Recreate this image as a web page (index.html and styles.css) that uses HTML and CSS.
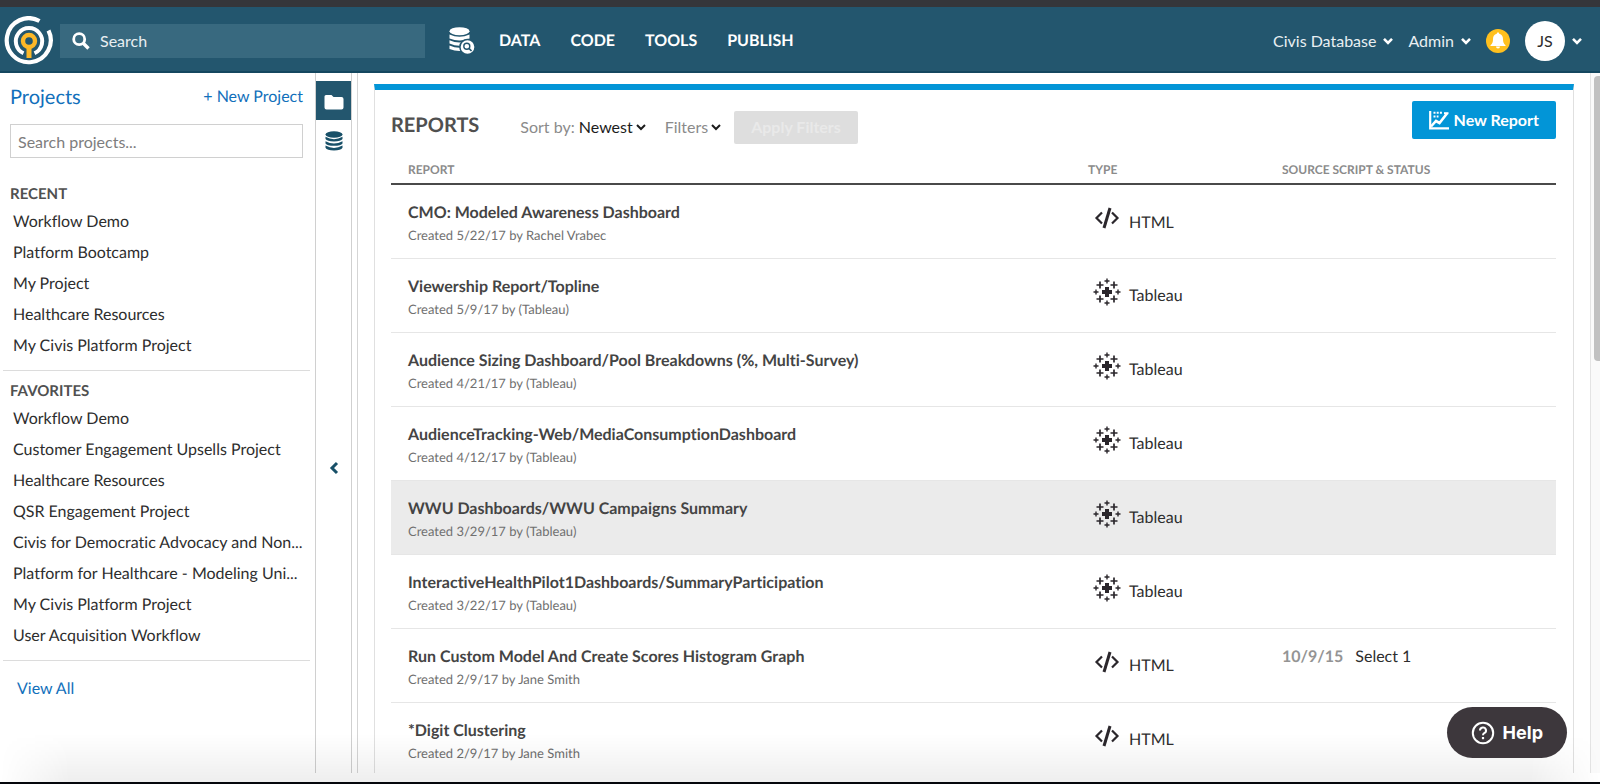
FILE: index.html
```html
<!DOCTYPE html>
<html lang="en">
<head>
<meta charset="utf-8">
<title>Reports</title>
<link rel="stylesheet" href="styles.css">
</head>
<body>
<svg class="sprite" aria-hidden="true">
  <symbol id="i-code" viewBox="0 0 26 22"><path d="M8 5.500L2.500 11L8 16.500M18 5.500L23.500 11L18 16.500" fill="none" stroke="#2b272c" stroke-width="2.200"/><path d="M16 1L10 21" stroke="#2b272c" stroke-width="3"/></symbol>
  <symbol id="i-tableau" viewBox="0 0 28 28"><g stroke="#2b272c" fill="none"><path d="M14 9V19M9 14H19" stroke-width="4"/><path d="M7 3.500V10.500M3.500 7H10.500M21 3.500V10.500M17.500 7H24.500M7 17.500V24.500M3.500 21H10.500M21 17.500V24.500M17.500 21H24.500" stroke-width="1.700"/><path d="M14 .5V5.500M11.500 3H16.500M14 22.500V27.500M11.500 25H16.500M3 11.500V16.500M.5 14H5.500M25 11.500V16.500M22.500 14H27.500" stroke-width="1.400"/></g></symbol>
  <symbol id="i-down" viewBox="0 0 10 8"><path d="M1 2L5 6L9 2" fill="none" stroke="currentColor" stroke-width="2"/></symbol>
  <symbol id="i-down-bold" viewBox="0 0 10 8"><path d="M1 1.800L5 5.800L9 1.800" fill="none" stroke="currentColor" stroke-width="2.600"/></symbol>
</svg>
<div class="app">
  <header class="topbar">
    <a class="logo" href="#" aria-label="Home">
      <svg width="50" height="50" viewBox="0 0 50 50" fill="none">
        <path d="M35.500 5A22 22 0 1 0 44.500 14.500" stroke="#fff" stroke-width="4.200"/>
        <path d="M19.500 37.300A13.200 13.200 0 1 1 30.500 37.300" stroke="#fff" stroke-width="4"/>
        <circle cx="25" cy="25" r="6" stroke="#fdb827" stroke-width="4.400"/>
        <path d="M25 30V42" stroke="#fdb827" stroke-width="5"/>
      </svg>
    </a>
    <label class="search">
      <svg width="18" height="18" viewBox="0 0 18 18" fill="none" stroke="#fff" aria-hidden="true"><circle cx="7.200" cy="7.200" r="5.500" stroke-width="2.800"/><path d="M11 11L16.500 16.500" stroke-width="3.400"/></svg>
      <input type="text" placeholder="Search" aria-label="Search">
    </label>
    <a class="dbsearch" href="#" aria-label="Search data">
      <svg width="26" height="28" viewBox="0 0 26 28">
        <ellipse cx="10.500" cy="4.200" rx="10" ry="4" fill="#fff"/>
        <g fill="#fff"><path d="M.5 7.500Q10.500 12 20.500 7.500V11.500Q10.500 15.500 .5 11.500Z"/><path d="M.5 13.200Q10.500 17.700 20.500 13.200V16.500Q10.500 21 .5 16.500Z"/><path d="M.5 18.400Q10.500 23 20.500 18.400V22Q10.500 26 .5 22Z"/></g>
        <circle cx="18.500" cy="20" r="7.600" fill="#fff" stroke="#23566e" stroke-width="1.500"/>
        <circle cx="17.800" cy="19.200" r="3" fill="none" stroke="#23566e" stroke-width="1.400"/><path d="M20 21.400L22.500 24" stroke="#23566e" stroke-width="1.600"/>
      </svg>
    </a>
    <nav class="mainnav">
      <a href="#">DATA</a><a href="#">CODE</a><a href="#">TOOLS</a><a href="#">PUBLISH</a>
    </nav>
    <div class="account">
      <button class="dropdown">Civis Database <svg width="10" height="8"><use href="#i-down-bold"/></svg></button>
      <button class="dropdown">Admin <svg width="10" height="8"><use href="#i-down-bold"/></svg></button>
      <button class="bell" aria-label="Notifications"><svg width="24" height="24" viewBox="0 0 24 24"><circle cx="12" cy="12" r="12" fill="#ffc01e"/><path d="M12 3.500C12.800 3.500 13.200 4 13.200 4.800C16 5.500 17 7.500 17 10C17 13 17.500 14.500 19.500 16.200V17H4.500V16.200C6.500 14.500 7 13 7 10C7 7.500 8 5.500 10.800 4.800C10.800 4 11.200 3.500 12 3.500ZM10 17.500H14A2 2 0 0 1 10 17.500Z" fill="#fff"/></svg></button>
      <button class="user"><span class="avatar">JS</span><svg width="10" height="8"><use href="#i-down-bold"/></svg></button>
    </div>
  </header>
  <div class="body">
    <aside class="sidebar">
      <div class="side-head"><h2>Projects</h2><a href="#">+ New Project</a></div>
      <input class="side-search" type="text" placeholder="Search projects..." aria-label="Search projects">
      <section class="group">
        <h3>RECENT</h3>
        <ul>
          <li><a href="#">Workflow Demo</a></li>
          <li><a href="#">Platform Bootcamp</a></li>
          <li><a href="#">My Project</a></li>
          <li><a href="#">Healthcare Resources</a></li>
          <li><a href="#">My Civis Platform Project</a></li>
        </ul>
      </section>
      <section class="group">
        <h3>FAVORITES</h3>
        <ul>
          <li><a href="#">Workflow Demo</a></li>
          <li><a href="#">Customer Engagement Upsells Project</a></li>
          <li><a href="#">Healthcare Resources</a></li>
          <li><a href="#">QSR Engagement Project</a></li>
          <li><a href="#">Civis for Democratic Advocacy and Non...</a></li>
          <li><a href="#">Platform for Healthcare - Modeling Uni...</a></li>
          <li><a href="#">My Civis Platform Project</a></li>
          <li><a href="#">User Acquisition Workflow</a></li>
        </ul>
      </section>
      <a class="view-all" href="#">View All</a>
    </aside>
    <div class="rail">
      <button class="rail-btn active" aria-label="Projects"><svg width="20" height="16" viewBox="0 0 20 16"><path d="M2 1H7.500L9.500 3H17.500Q19.500 3 19.500 5V13.500Q19.500 15.500 17.500 15.500H2.500Q.5 15.500 .5 13.500V2.500Q.5 1 2 1Z" fill="#fff"/></svg></button>
      <button class="rail-btn" aria-label="Databases"><svg width="18" height="20" viewBox="0 0 18 20" fill="#185068"><ellipse cx="9" cy="3.500" rx="8.500" ry="3.200"/><path d="M.5 5.800Q9 10.500 17.500 5.800V8Q16 10.400 9 10.400T.5 8Z"/><path d="M.5 10.200Q9 14.900 17.500 10.200V12.400Q16 14.800 9 14.800T.5 12.400Z"/><path d="M.5 14.600Q9 19.300 17.500 14.600V16.800Q16 19.400 9 19.400T.5 16.800Z"/></svg></button>
      <button class="collapse" aria-label="Collapse sidebar"><svg width="10" height="14" viewBox="0 0 10 14"><path d="M8 2L3 7L8 12" fill="none" stroke="#185068" stroke-width="3"/></svg></button>
    </div>
    <main class="content">
      <div class="panel">
        <div class="panel-head">
          <h1>REPORTS</h1>
          <button class="filter">Sort by: <span>Newest</span><svg width="10" height="8"><use href="#i-down"/></svg></button>
          <button class="filter">Filters<svg width="10" height="8"><use href="#i-down"/></svg></button>
          <button class="apply" disabled>Apply Filters</button>
          <button class="new-report"><svg width="20" height="19" viewBox="0 0 20 19" fill="none" stroke="#fff"><path d="M1.200 0V17.300H20" stroke-width="2.200"/><path d="M2 15.500L7 10L10.500 12L18 2.500" stroke-width="2.600"/><path d="M15 2.200H19.500" stroke-width="2"/><path d="M4.500 1.800H13M4.500 5.500H9.500" stroke-width="2" stroke-dasharray="2 1.200"/></svg>New Report</button>
        </div>
        <table>
          <thead><tr><th class="c-report">REPORT</th><th class="c-type">TYPE</th><th class="c-source">SOURCE SCRIPT &amp; STATUS</th></tr></thead>
          <tbody>
            <tr><td><a href="#">CMO: Modeled Awareness Dashboard</a><small>Created 5/22/17 by Rachel Vrabec</small></td><td><div class="type"><svg width="26" height="22"><use href="#i-code"/></svg><span>HTML</span></div></td><td></td></tr>
            <tr><td><a href="#">Viewership Report/Topline</a><small>Created 5/9/17 by (Tableau)</small></td><td><div class="type"><svg width="28" height="28"><use href="#i-tableau"/></svg><span>Tableau</span></div></td><td></td></tr>
            <tr><td><a href="#">Audience Sizing Dashboard/Pool Breakdowns (%, Multi-Survey)</a><small>Created 4/21/17 by (Tableau)</small></td><td><div class="type"><svg width="28" height="28"><use href="#i-tableau"/></svg><span>Tableau</span></div></td><td></td></tr>
            <tr><td><a href="#">AudienceTracking-Web/MediaConsumptionDashboard</a><small>Created 4/12/17 by (Tableau)</small></td><td><div class="type"><svg width="28" height="28"><use href="#i-tableau"/></svg><span>Tableau</span></div></td><td></td></tr>
            <tr class="hovered"><td><a href="#">WWU Dashboards/WWU Campaigns Summary</a><small>Created 3/29/17 by (Tableau)</small></td><td><div class="type"><svg width="28" height="28"><use href="#i-tableau"/></svg><span>Tableau</span></div></td><td></td></tr>
            <tr><td><a href="#">InteractiveHealthPilot1Dashboards/SummaryParticipation</a><small>Created 3/22/17 by (Tableau)</small></td><td><div class="type"><svg width="28" height="28"><use href="#i-tableau"/></svg><span>Tableau</span></div></td><td></td></tr>
            <tr><td><a href="#">Run Custom Model And Create Scores Histogram Graph</a><small>Created 2/9/17 by Jane Smith</small></td><td><div class="type"><svg width="26" height="22"><use href="#i-code"/></svg><span>HTML</span></div></td><td><div class="source"><time>10/9/15</time><span>Select 1</span></div></td></tr>
            <tr><td><a href="#">*Digit Clustering</a><small>Created 2/9/17 by Jane Smith</small></td><td><div class="type"><svg width="26" height="22"><use href="#i-code"/></svg><span>HTML</span></div></td><td></td></tr>
          </tbody>
        </table>
      </div>
    </main>
    <div class="scrollbar"><div class="thumb"></div></div>
  </div>
  <div class="shade"></div>
  <button class="help"><svg width="24" height="24" viewBox="0 0 24 24" fill="none" stroke="#fff"><circle cx="12" cy="12" r="10.200" stroke-width="2"/><path d="M9 9.500A3 3 0 1 1 13.200 12.200Q12 12.800 12 14.200" stroke-width="2"/><path d="M12 16V18.200" stroke-width="2.200"/></svg>Help</button>
</div>
</body>
</html>
```
FILE: styles.css
```css
* { box-sizing: border-box; }
body { margin: 0; font-family: Lato, "Liberation Sans", sans-serif; font-size: 16px; line-height: 20px; color: #2e2e2e; background: #fff; text-rendering: geometricPrecision; font-variant-ligatures: none; }
a { color: inherit; text-decoration: none; }
button { font: inherit; color: inherit; background: none; border: 0; padding: 0; display: flex; align-items: center; }
input { font: inherit; }
h1, h2, h3, ul { margin: 0; padding: 0; list-style: none; }
svg { flex: none; display: block; }
.sprite { position: absolute; width: 0; height: 0; }
.app { position: relative; height: 100vh; display: flex; flex-direction: column; overflow: hidden; padding-bottom: 9px; border-top: 7px solid #35363a; border-bottom: 2px solid #04060b; }

.topbar { flex: none; display: flex; align-items: center; height: 66px; padding: 3px 18px 0 4px; background: #23566e; border-bottom: 2px solid #14475f; color: #fff; }
.search { display: flex; align-items: center; gap: 10px; width: 365px; height: 34px; margin-left: 6px; padding: 0 12px; background: #38697f; }
.search input { flex: 1; min-width: 0; padding: 0; border: 0; background: none; color: #fff; outline: 0; }
.search input::placeholder { color: #e9eff2; opacity: 1; }
.dbsearch { margin-left: 24px; }
.mainnav { display: flex; gap: 30px; margin-left: 24px; font-weight: 700; }
.account { display: flex; align-items: center; margin-left: auto; }
.dropdown { gap: 7px; margin-right: 15px; color: #e9eff2; }
.dropdown svg { color: #fff; }
.bell { margin-right: 15px; }
.user { gap: 7px; }
.avatar { display: flex; align-items: center; justify-content: center; width: 40px; height: 40px; border-radius: 50%; background: #fff; color: #2e2e2e; }

.body { flex: 1; min-height: 0; display: flex; }
.sidebar { flex: none; width: 316px; border-right: 1px solid #d0d0d0; overflow: hidden; }
.side-head { display: flex; align-items: center; justify-content: space-between; padding: 12px 12px 0 10px; color: #1270bb; }
.side-head h2 { font-size: 20px; line-height: 24px; font-weight: 400; }
.side-search { display: block; width: 293px; height: 34px; margin: 15px 0 0 10px; padding: 0 7px; border: 1px solid #d0d0d0; }
.side-search::placeholder { color: #7d7d7d; opacity: 1; }
.group { margin: 0 5px 0 3px; padding: 10px 7px 9px; border-bottom: 1px solid #dcdcdc; }
.side-search + .group { margin-top: 16px; }
.group h3 { font-size: 15px; line-height: 20px; font-weight: 700; color: #505050; }
.group ul { padding-top: 2px; }
.group li { height: 31px; padding: 6px 3px; line-height: 20px; white-space: nowrap; }
.view-all { display: block; margin: 18px 0 0 17px; color: #1270bb; }

.rail { flex: none; width: 42px; position: relative; display: flex; flex-direction: column; align-items: flex-start; padding-top: 8px; border-right: 1px solid #d5d5d5; }
.rail::before { content: ""; position: absolute; top: 0; bottom: 0; left: 35px; width: 1px; background: #d0d0d0; }
.rail-btn { width: 35px; height: 39px; padding-top: 2px; justify-content: center; }
.rail-btn.active { background: #23566e; }
.collapse { width: 35px; justify-content: center; margin: auto 0; padding-top: 4px; }

.content { flex: 1; min-width: 0; padding: 11px 16px 0; overflow: hidden; }
.panel { height: 100%; overflow: hidden; padding: 0 17px 0 16px; border: 1px solid #e0e0e0; border-top: 6px solid #0295d7; border-bottom: 0; }
.panel-head { display: flex; align-items: center; height: 64px; padding-top: 6px; }
.panel-head h1 { margin-right: 41px; font-size: 20px; line-height: 24px; font-weight: 700; color: #505050; }
.filter { margin: 4px 19px 0 0; color: #8b8b8b; white-space: pre; }
.filter span, .filter svg { color: #1c1c1c; }
.filter svg { margin-left: 3px; }
.apply { height: 33px; margin: 4px 0 0 -6px; padding: 0 17px; border-radius: 2px; background: #dedede; color: #e9e9e9; font-weight: 700; }
.new-report { align-self: flex-start; height: 38px; margin: 5px 0 0 auto; padding: 0 17px; gap: 5px; border-radius: 2px; background: #0295d7; color: #fff; font-weight: 700; }

table { width: 100%; border-collapse: collapse; table-layout: fixed; }
th { height: 30px; padding: 2px 17px 0; text-align: left; vertical-align: middle; font-size: 12px; line-height: 16px; color: #8b8b8b; border-bottom: 2px solid #4a4a4a; }
.c-report { width: 680px; }
.c-type { width: 194px; }
td { height: 74px; padding: 18px 17px 0; vertical-align: top; border-bottom: 1px solid #e6e6e6; }
td a { display: block; line-height: 20px; font-weight: 700; color: #444; }
td small { display: block; margin-top: 4px; font-size: 13px; line-height: 16px; color: #707070; }
.type { display: grid; grid-template-columns: 28px auto; justify-content: start; align-items: center; justify-items: center; gap: 8px; height: 30px; margin-left: 5px; }
.type span { padding-top: 9px; }
.source { display: flex; gap: 12px; }
.source time { font-weight: 700; color: #949494; }
.hovered { background: #ebebeb; }

.scrollbar { flex: none; width: 10px; padding: 3px 0 0 3px; background: #fafafa; border-left: 1px solid #e4e4e4; }
.thumb { height: 285px; border-radius: 4px 0 0 4px; background: #c1c1c1; }
.shade { position: absolute; left: 0; right: 0; bottom: 0; height: 48px; pointer-events: none; background: linear-gradient(rgba(0,0,0,0), rgba(0,0,0,.065)); -webkit-mask-image: linear-gradient(90deg, transparent, #000 70px, #000 calc(100% - 70px), transparent); mask-image: linear-gradient(90deg, transparent, #000 70px, #000 calc(100% - 70px), transparent); }
.help { position: absolute; right: 33px; bottom: 24px; height: 51px; padding: 0 24px; gap: 8px; border-radius: 26px; background: #3d373c; color: #fff; font-family: Inter, sans-serif; font-size: 18px; font-weight: 700; }
```
